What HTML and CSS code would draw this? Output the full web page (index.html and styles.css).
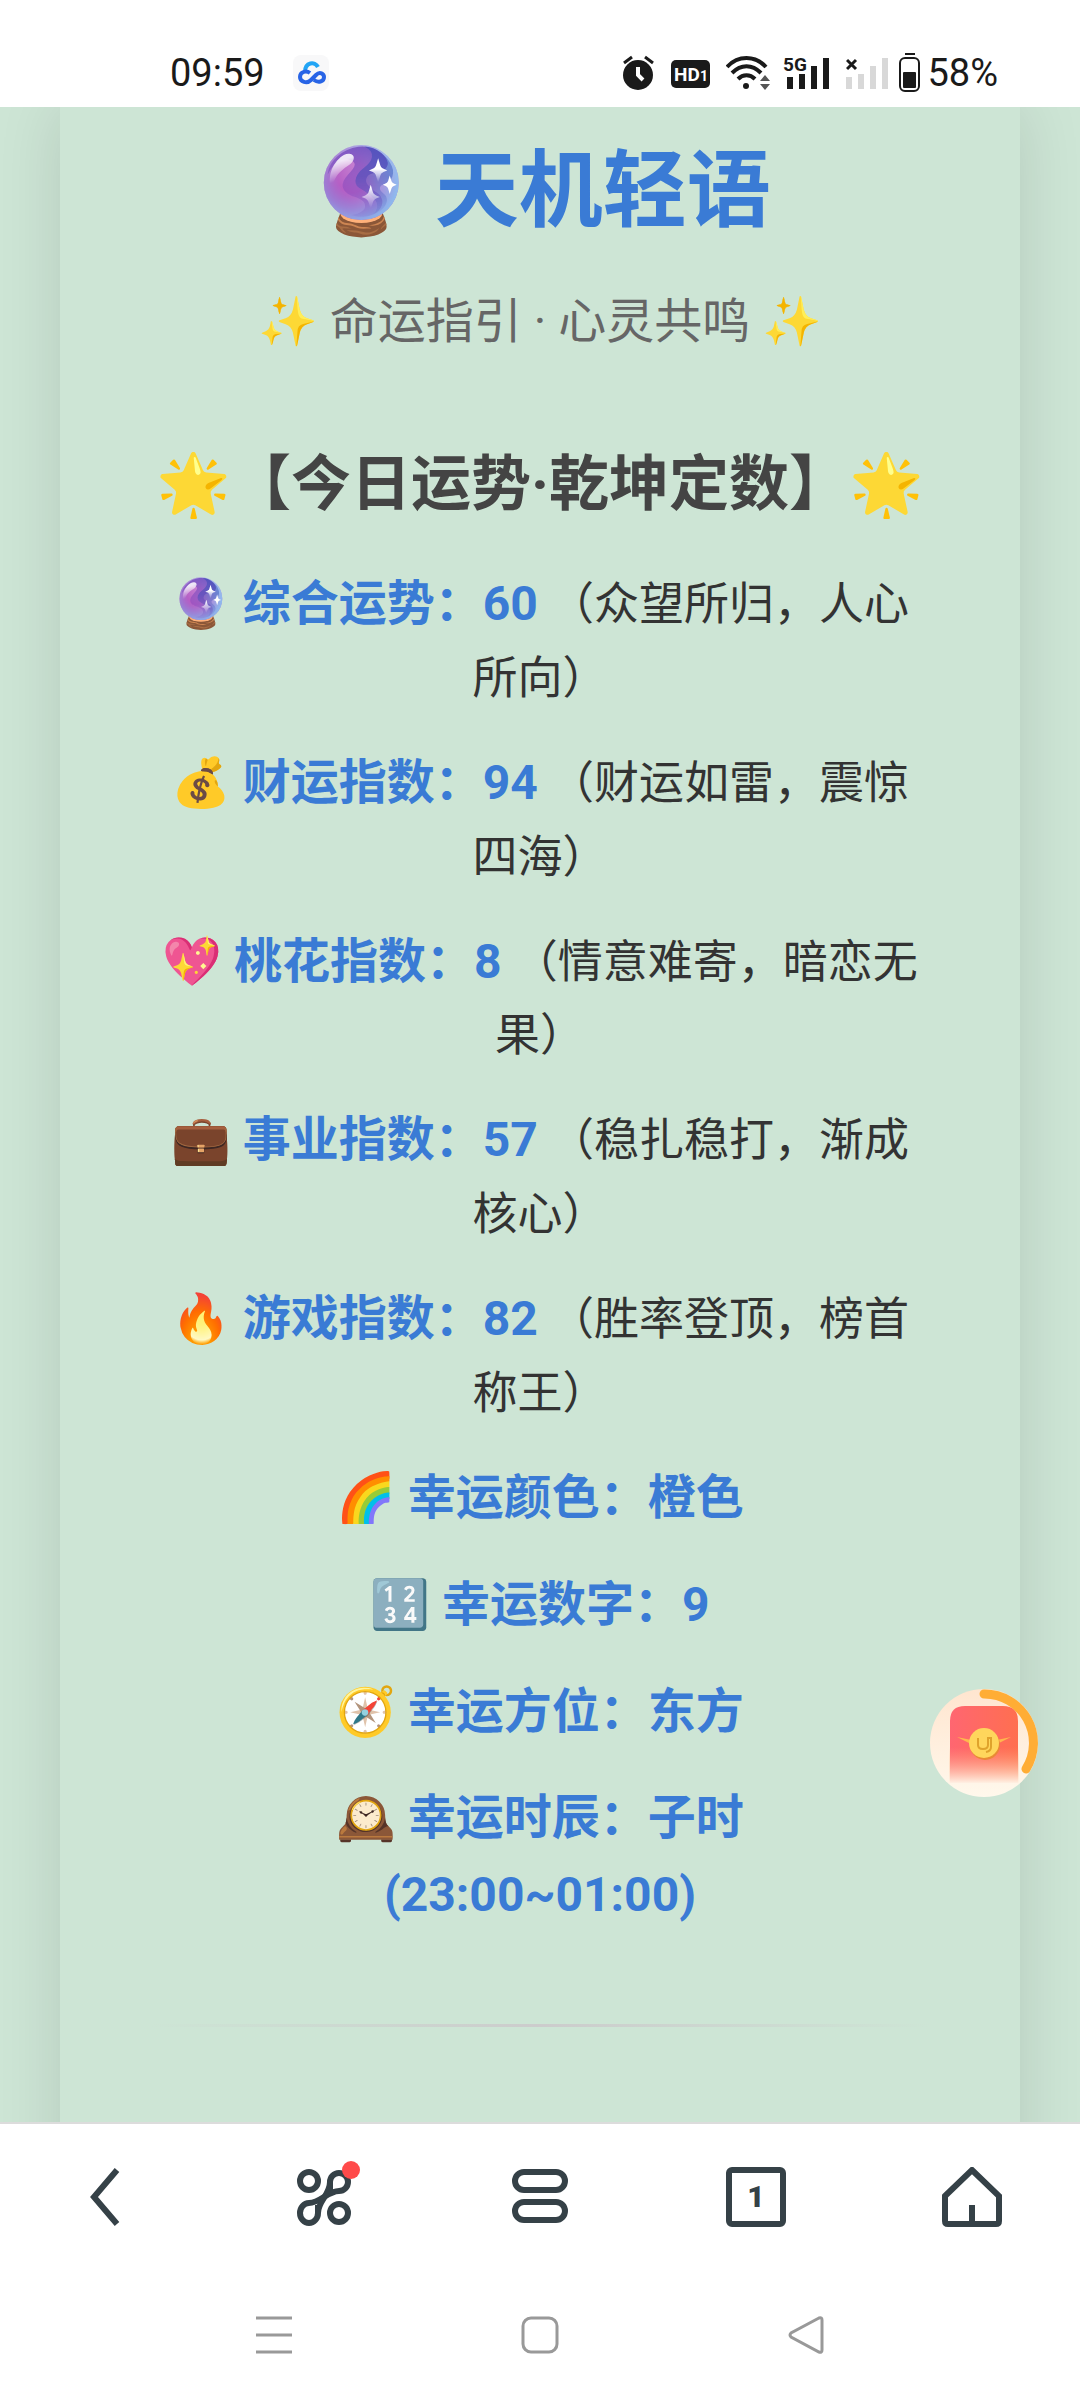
FILE: index.html
```
<!DOCTYPE html>
<html lang="zh-CN">
<head>
    <meta charset="UTF-8">
    <meta name="viewport" content="width=device-width, initial-scale=1.0">
    <title>天机轻语</title>
    <link rel="stylesheet" href="styles.css">
</head>
<body>
    <header class="status-bar">
        <span class="time">09:59</span>
        <svg class="cloud" width="36" height="36" viewBox="0 0 36 36">
            <rect width="36" height="36" rx="8" fill="#f8f8f9"/>
            <path d="M12 17c0-10 10-11 13-5" fill="none" stroke="#22a5f5" stroke-width="4"/>
            <path d="M17 18c-4-3-10-1-10 4s7 7 11 3l5-5c4-4 8-1 8 2 0 5-6 6-10 3" fill="none" stroke="#2864e6" stroke-width="4"/>
        </svg>
        <div class="status-icons">
            <svg width="33" height="36" viewBox="0 0 33 36">
                <circle cx="16" cy="20" r="15" fill="#1a1a1a"/>
                <path d="M2 8l8-6M31 8l-8-6" stroke="#1a1a1a" stroke-width="3"/>
                <path d="M16 12v8l5 5" fill="none" stroke="#fff" stroke-width="4"/>
            </svg>
            <svg class="hd" width="39" height="36" viewBox="0 0 39 36">
                <rect y="5" width="39" height="28" rx="5" fill="#1a1a1a"/>
                <text x="3" y="26" class="hd-text">HD</text>
                <text x="29" y="26" class="hd-num">1</text>
            </svg>
            <svg class="wifi" width="45" height="36" viewBox="0 0 45 36">
                <g fill="none" stroke="#1a1a1a" stroke-width="4">
                    <path d="M1 12c11-12 28-12 39 0M6 18c9-9 20-9 29 0M12 24c5-5 12-5 17 0"/>
                </g>
                <circle cx="20" cy="31" r="3" fill="#1a1a1a"/>
                <path d="M34 26l5-6 5 6zM34 29h10l-5 6z" fill="#555"/>
            </svg>
            <svg class="signal" width="47" height="36" viewBox="0 0 47 36">
                <text x="0" y="16" class="net-text">5G</text>
                <path d="M4 22h6v12H4zM16 19h6v15h-6zM28 11h6v23h-6zM40 3h6v31h-6z" fill="#1a1a1a"/>
            </svg>
            <svg class="no-signal" width="43" height="36" viewBox="0 0 43 36">
                <path d="M1 5l9 9M10 5l-9 9" stroke="#1a1a1a" stroke-width="3"/>
                <path d="M0 22h6v12H0zM12 19h6v15h-6zM24 11h6v23h-6zM36 3h6v31h-6z" fill="#d8d8d8"/>
            </svg>
            <svg class="battery" width="22" height="40" viewBox="0 0 22 40">
                <path d="M6 1h10" stroke="#1a1a1a" stroke-width="2"/>
                <rect x="1" y="5" width="19" height="33" rx="5" fill="none" stroke="#1a1a1a" stroke-width="2"/>
                <rect x="4" y="19" width="13" height="16" rx="1" fill="#1a1a1a"/>
            </svg>
            <span class="time">58%</span>
        </div>
    </header>

    <main class="page">
        <div class="container">
            <h1>🔮 天机轻语</h1>
            <p class="subtitle">✨ 命运指引 · 心灵共鸣 ✨</p>

            <h2>🌟【今日运势·乾坤定数】🌟</h2>
            <ul class="fortune">
                <li><b>🔮 综合运势：60</b> （众望所归，人心所向）</li>
                <li><b>💰 财运指数：94</b> （财运如雷，震惊四海）</li>
                <li><b>💖 桃花指数：8</b> （情意难寄，暗恋无果）</li>
                <li><b>💼 事业指数：57</b> （稳扎稳打，渐成核心）</li>
                <li><b>🔥 游戏指数：82</b> （胜率登顶，榜首称王）</li>
                <li><b>🌈 幸运颜色：橙色</b></li>
                <li><b>🔢 幸运数字：9</b></li>
                <li><b>🧭 幸运方位：东方</b></li>
                <li><b>🕰️ 幸运时辰：子时<br>(23:00~01:00)</b></li>
            </ul>
            <hr>
        </div>

        <button class="packet" aria-label="红包">
            <svg width="108" height="108" viewBox="0 0 108 108">
                <defs>
                    <linearGradient id="cream" x1="0" y1="0" x2="0" y2="1">
                        <stop offset="0" stop-color="#ffe5cf"/>
                        <stop offset="1" stop-color="#fff8ec"/>
                    </linearGradient>
                    <linearGradient id="red" x1="0" y1="0" x2="1" y2="0">
                        <stop offset="0" stop-color="#ff6671"/>
                        <stop offset="1" stop-color="#ff6f50"/>
                    </linearGradient>
                    <linearGradient id="fade" x1="0" y1="0" x2="0" y2="1">
                        <stop offset="0" stop-color="#ffa873" stop-opacity="0"/>
                        <stop offset="1" stop-color="#fff6ea"/>
                    </linearGradient>
                </defs>
                <circle cx="54" cy="54" r="54" fill="url(#cream)"/>
                <path d="M20 94V32q0-15 15-15h38q15 0 15 15v62z" fill="url(#red)"/>
                <path d="M19 58h70v37H19z" fill="url(#fade)"/>
                <path d="M27 48l14 3v4zM81 48l-14 3v4z" fill="#ffb84d"/>
                <circle cx="55" cy="56" r="15" fill="#e98a35"/>
                <circle cx="54" cy="54" r="15" fill="#ffd65c"/>
                <path d="M48 49v7q0 4 5 4t5-4v-7h3v9q0 4-5 5" fill="none" stroke="#dfa32c" stroke-width="2"/>
                <path d="M54 5a49 49 0 0 1 42 75" fill="none" stroke="#ffad35" stroke-width="9" stroke-linecap="round"/>
            </svg>
        </button>
    </main>

    <nav class="toolbar">
        <button aria-label="后退">
            <svg width="60" height="60" viewBox="0 0 60 60"><path d="M39 3L16 30l23 27" stroke-width="6"/></svg>
        </button>
        <button aria-label="工具">
            <svg width="60" height="60" viewBox="0 0 60 60">
                <circle cx="15" cy="14" r="9"/>
                <circle cx="45" cy="46" r="9"/>
                <path d="M36 25V15a9 9 0 1 1 9 9C34 24 26 36 15 36a9 10 0 1 0 9 10V38"/>
                <path d="M24 46C24 34 36 28 36 15"/>
            </svg>
            <span class="dot"></span>
        </button>
        <button aria-label="菜单">
            <svg width="60" height="60" viewBox="0 0 60 60">
                <rect x="5" y="5" width="50" height="18" rx="9"/>
                <rect x="5" y="35" width="50" height="18" rx="9"/>
            </svg>
        </button>
        <button class="tabs"><span>1</span></button>
        <button aria-label="主页">
            <svg width="60" height="60" viewBox="0 0 60 60"><path d="M3 29L30 3l27 26v25q0 3-3 3H6q-3 0-3-3zM30 38v19"/></svg>
        </button>
    </nav>

    <nav class="system-nav">
        <button aria-label="最近任务">
            <svg width="38" height="38" viewBox="0 0 38 38"><path d="M1 2h36M1 19h36M1 36h36"/></svg>
        </button>
        <button aria-label="桌面">
            <svg width="38" height="38" viewBox="0 0 38 38"><rect x="2" y="2" width="34" height="34" rx="8"/></svg>
        </button>
        <button aria-label="返回">
            <svg width="38" height="38" viewBox="0 0 38 38"><path d="M32 2L4 17q-2 2 0 4l28 15q3 1 3-2V4q0-3-3-2z"/></svg>
        </button>
    </nav>
</body>
</html>
```
FILE: styles.css
```
* {
    box-sizing: border-box;
}
body {
    margin: 0;
    min-height: 100vh;
    display: flex;
    flex-direction: column;
    font-family: Roboto, "Noto Sans CJK SC", "Noto Color Emoji", sans-serif;
    background-color: #fff;
    color: #333;
}
button {
    padding: 0;
    border: none;
    background: none;
    font-family: inherit;
    cursor: pointer;
}
svg {
    display: block;
}

/* status bar */
.status-bar {
    height: 107px;
    padding: 38px 82px 0 170px;
    display: flex;
    align-items: center;
    color: #1a1a1a;
}
.time {
    font-size: 38px;
    line-height: 44px;
}
.cloud {
    margin-left: 28px;
}
.status-icons {
    margin-left: auto;
    display: flex;
    align-items: center;
    gap: 16px;
}
.status-icons .wifi {
    margin-right: -4px;
}
.status-icons .battery {
    margin: 0 -10px 0 -6px;
}
.hd-text, .hd-num {
    font-weight: bold;
    fill: #fff;
}
.hd-text {
    font-size: 19px;
}
.hd-num {
    font-size: 14px;
}
.net-text {
    font-size: 19px;
    font-weight: bold;
    fill: #1a1a1a;
}

/* fortune page */
.page {
    position: relative;
    flex: 1;
    display: flex;
    flex-direction: column;
    overflow: hidden;
    background-color: #cde5d5;
    border-bottom: 2px solid #dcdcdc;
}
.container {
    flex: 1;
    margin: -30px 60px -60px;
    padding: 59px 90px 150px;
    text-align: center;
    box-shadow: 0 30px 60px rgba(0, 0, 0, 0.12);
}
h1 {
    margin: 0 0 35px;
    font-size: 84px;
    line-height: 112px;
    color: #3a7bd5;
}
.subtitle {
    margin: 0 0 77px;
    font-size: 48px;
    line-height: 77px;
    color: #666;
}
h2 {
    margin: 0 0 33px;
    font-size: 60px;
    line-height: 96px;
    color: #444;
}
.fortune {
    margin: 0;
    padding: 0 5px;
    list-style: none;
    font-size: 45px;
    line-height: 1.6;
}
.fortune li {
    margin-bottom: 30px;
}
.fortune b {
    font-size: 48px;
    color: #3a7bd5;
}
hr {
    height: 3px;
    margin: 90px 0 0;
    border: none;
    background: linear-gradient(to right, transparent, #ccc, transparent);
}
.packet {
    position: absolute;
    right: 42px;
    bottom: 325px;
}

/* browser toolbar */
.toolbar {
    height: 146px;
    display: grid;
    grid-template-columns: repeat(5, 1fr);
    align-items: center;
    justify-items: center;
}
.toolbar button {
    position: relative;
}
.toolbar svg {
    fill: none;
    stroke: #354147;
    stroke-width: 6;
}
.dot {
    position: absolute;
    top: -6px;
    right: -6px;
    width: 18px;
    height: 18px;
    border-radius: 50%;
    background-color: #ff4a4a;
}
.toolbar .tabs {
    width: 60px;
    height: 60px;
    border: 6px solid #354147;
    border-radius: 6px;
    color: #354147;
    font-size: 30px;
    font-weight: 900;
    line-height: 48px;
}

/* system navigation */
.system-nav {
    height: 130px;
    padding: 0 13%;
    display: grid;
    grid-template-columns: repeat(3, 1fr);
    align-items: center;
    justify-items: center;
}
.system-nav svg {
    fill: none;
    stroke: #999;
    stroke-width: 3;
}
```
